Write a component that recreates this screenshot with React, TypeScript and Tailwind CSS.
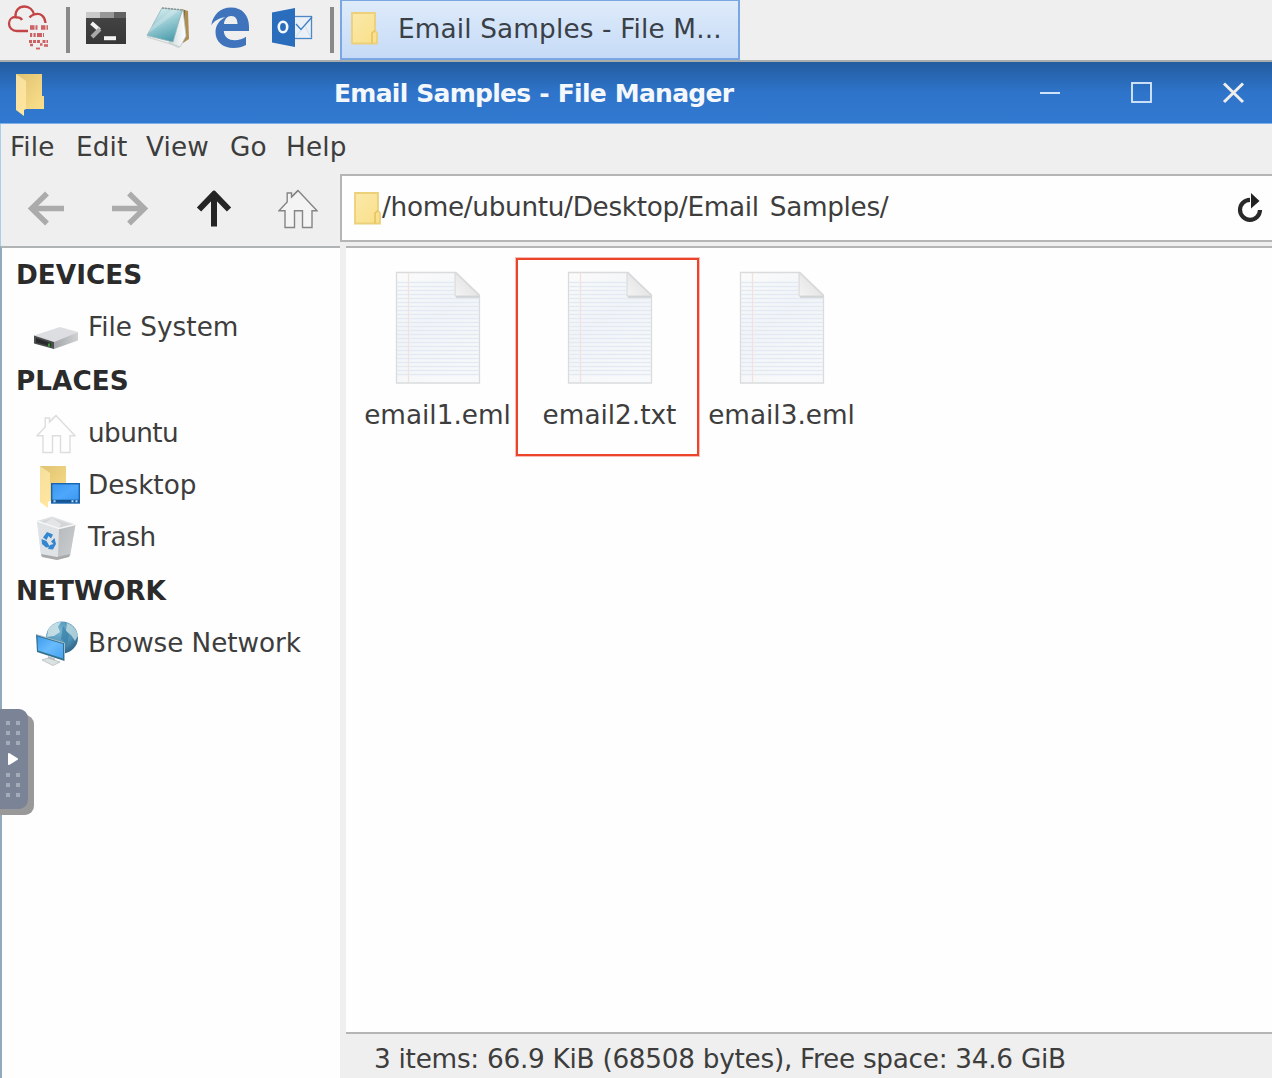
import React from "react";

const font = "font-['DejaVu_Sans',sans-serif]";

function OpenFolder({ className }: { className: string }) {
  return (
    <svg viewBox="0 0 30 43" className={className} preserveAspectRatio="none">
      <defs>
        <linearGradient id="folderBack" x1="0" y1="0" x2="1" y2="1">
          <stop offset="0" stopColor="#dfc272" />
          <stop offset="1" stopColor="#fbe08c" />
        </linearGradient>
        <linearGradient id="folderFlap" x1="0" y1="0" x2="0.3" y2="1">
          <stop offset="0" stopColor="#f5dfa0" />
          <stop offset="1" stopColor="#ffe59d" />
        </linearGradient>
      </defs>
      <path d="M1 1H27V23H29V36H1Z" fill="url(#folderBack)" />
      <path d="M1 1L11 8V36L9 37V43L1 37Z" fill="url(#folderFlap)" />
    </svg>
  );
}

function ClosedFolder() {
  return (
    <svg width="27" height="33" viewBox="0 0 27 33" className="shrink-0">
      <defs>
        <linearGradient id="closedFolder" x1="0" y1="0" x2="1" y2="1">
          <stop offset="0" stopColor="#fbe9ab" />
          <stop offset="1" stopColor="#f9df88" />
        </linearGradient>
      </defs>
      <path d="M1 1H24V19L26 21V31.5H1Z" fill="url(#closedFolder)" stroke="#ecd07a" strokeWidth="1.8" />
      <path d="M24 18.5L21 21V31.5" fill="none" stroke="#e3c15c" strokeWidth="1.5" />
    </svg>
  );
}

function HomeIcon({ stroke }: { stroke: string }) {
  return (
    <svg width="40" height="40" viewBox="0 0 40 40" className="shrink-0">
      <path
        d="M20 1.5L39 21.8H34V38.5H24.5V21.8H16.5V38.5H7V21.8H1L9.2 13V4H13.5V8Z"
        fill="#ffffff"
        fillOpacity="0.35"
        stroke={stroke}
        strokeWidth="1.4"
      />
      <path d="M13.5 8L20 1.5" stroke={stroke} strokeWidth="1.4" />
    </svg>
  );
}

function CloudIcon() {
  return (
    <svg width="44" height="46" viewBox="0 0 44 46">
      <path
        d="M21 26H10C5 26 2 22.500 2 18.500C2 14.500 5 12 8.500 12C8 5.500 12 1.500 17.500 1.500C22.500 1.500 26 5 27 9.500C34 7 38 12 38.500 18M8.500 12.500C11.500 12 14 13 15 15M27 9.500C25 10.200 23.500 11 22.500 12.500"
        fill="none"
        stroke="#c34446"
        strokeWidth="2.3"
      />
      <g stroke="#c5494b" strokeOpacity="0.85">
        <path d="M23 22.500H41" strokeDasharray="4.500 1 2 3.500" strokeWidth="4.500" />
        <path d="M23 30H37" strokeDasharray="2.200 1.300 2.200 1.300 5 1" strokeWidth="4.200" />
        <path d="M22 36.500H41" strokeDasharray="3 1 3 1 3 2.500" strokeWidth="3" />
        <path d="M23 40H26M33 39.500H35.500M37 40.500H41" strokeWidth="2.500" />
        <path d="M29 43.500H33" strokeWidth="1.800" />
      </g>
    </svg>
  );
}

function TerminalIcon() {
  return (
    <svg width="40" height="33" viewBox="0 0 40 33">
      <defs>
        <linearGradient id="term" x1="0" y1="0" x2="0" y2="1">
          <stop offset="0" stopColor="#454545" />
          <stop offset="1" stopColor="#373737" />
        </linearGradient>
      </defs>
      <rect width="40" height="32" fill="url(#term)" />
      <path d="M0 0H14V6H0Z" fill="#c9c9c9" />
      <path d="M14 0H28V6H14Z" fill="#979797" />
      <path d="M28 0H40V6H28Z" fill="#636363" />
      <path d="M5.500 11L13.500 18" stroke="#f2f2f2" strokeWidth="4" />
      <path d="M14 17L6 25" stroke="#a9a9a9" strokeWidth="4" />
      <path d="M18 26.200H30" stroke="#f2f2f2" strokeWidth="4" />
    </svg>
  );
}

function NotepadIcon() {
  return (
    <svg width="44" height="42" viewBox="0 0 44 42">
      <defs>
        <linearGradient id="notepad" x1="0.2" y1="0" x2="0.6" y2="1">
          <stop offset="0" stopColor="#dcf0f2" />
          <stop offset="0.45" stopColor="#9dced6" />
          <stop offset="1" stopColor="#4b9cab" />
        </linearGradient>
        <linearGradient id="notepadSide" x1="0" y1="0" x2="1" y2="0">
          <stop offset="0" stopColor="#cfd8da" />
          <stop offset="1" stopColor="#ffffff" />
        </linearGradient>
      </defs>
      <path d="M36 3L42 5L43 33L37 37Z" fill="#ad8d52" />
      <path d="M38 4L37 30" stroke="#6b5d3a" strokeWidth="1.500" />
      <path d="M37 4L40 30L34 41L23 37Z" fill="url(#notepadSide)" stroke="#b9c5c7" strokeWidth="0.800" />
      <path d="M16 2L36 4L27 36L1 29.500Z" fill="url(#notepad)" stroke="#8fb5bb" strokeWidth="0.800" />
      <path d="M4 22L26 4L34 4L3 27Z" fill="#ffffff" fillOpacity="0.22" />
      <path d="M1 31L26 38.500L33 41.500" fill="none" stroke="#cbd3d2" strokeWidth="1.300" />
      <path d="M16 2L37 4" stroke="#8b9492" strokeWidth="1.500" strokeDasharray="2 1" />
    </svg>
  );
}

function EdgeIcon() {
  return (
    <svg width="38" height="41" viewBox="0 0 38 41">
      <path
        d="M.3 18.200C2 7.500 9.500.5 20 .5C31.500.5 38 8.500 38 19.500V24H12.800C13.200 30.500 18 33.200 23.500 33.200C28 33.200 32 31.800 35 29.800V38C31.500 40 27.500 41 22.500 41C11.500 41 4.500 34.500 4.500 25C4.500 18.500 8.500 12.800 14.500 10.200C8.500 10.800 3.500 13.500.3 18.200ZM13 17H26.500C26.500 12 24.500 9 20.300 9C16.200 9 13.300 12.500 13 17Z"
        fill="#3f74bd"
        fillRule="evenodd"
      />
    </svg>
  );
}

function OutlookIcon() {
  return (
    <svg width="41" height="40" viewBox="0 0 41 40">
      <rect x="20" y="8.500" width="19.500" height="22" fill="#eaf0f7" stroke="#4d87c4" strokeWidth="1.300" />
      <path d="M24 16L29 21.500L40 9" fill="none" stroke="#3f7fc4" strokeWidth="1.300" />
      <path d="M24 29L29 22M39 29.500L33 18" fill="none" stroke="#ccd9e8" strokeWidth="0.900" />
      <path d="M0 4.500L23 0V39L0 34.500Z" fill="#2a6dbd" />
      <ellipse cx="11" cy="19" rx="4.200" ry="5.300" fill="none" stroke="#f4f8ff" strokeWidth="2.600" />
    </svg>
  );
}

function DriveIcon() {
  return (
    <svg width="44" height="24" viewBox="0 0 44 24">
      <defs>
        <linearGradient id="driveSide" x1="0" y1="0" x2="1" y2="0">
          <stop offset="0" stopColor="#a4a7aa" />
          <stop offset="1" stopColor="#cfd1d3" />
        </linearGradient>
      </defs>
      <path d="M0 9.500L26 1L44 6L20 16Z" fill="#dcdee1" />
      <path d="M20 16L44 6V14.500L20 23Z" fill="url(#driveSide)" />
      <path d="M0 9.500L20 16V23L0 17.500Z" fill="#4a4d4e" />
      <path d="M2 12L17 17V20.500L2 16.500Z" fill="#282b2b" />
      <path d="M15 17.500V20.500" stroke="#3c9a36" strokeWidth="2" />
    </svg>
  );
}

function DesktopIcon() {
  return (
    <span className="relative block h-[43px] w-[42px]">
      <OpenFolder className="h-[43px] w-[30px]" />
      <svg width="29" height="21" viewBox="0 0 29 21" className="absolute top-[18px] left-[12px]">
        <defs>
          <linearGradient id="screen" x1="0" y1="0" x2="1" y2="1">
            <stop offset="0" stopColor="#3c96ef" />
            <stop offset="0.5" stopColor="#4da7fb" />
            <stop offset="1" stopColor="#3894f0" />
          </linearGradient>
        </defs>
        <rect x="0.700" y="0.700" width="27.600" height="19.300" fill="url(#screen)" stroke="#1765b3" strokeWidth="1.400" />
        <path d="M1 18.200H28" stroke="#165595" strokeWidth="3" />
        <path d="M2.500 18.200H4.500M20.500 18.200H22.500M24.500 18.200H26.500" stroke="#b5dcff" strokeWidth="2" />
      </svg>
    </span>
  );
}

function TrashIcon() {
  return (
    <svg width="40" height="44" viewBox="0 0 40 44">
      <defs>
        <linearGradient id="binSide" x1="0" y1="0" x2="1" y2="1">
          <stop offset="0" stopColor="#b5b9bc" />
          <stop offset="1" stopColor="#cccfd1" />
        </linearGradient>
      </defs>
      <path d="M1 5L16 0.500L39.500 8.500L34 40L21 44L5 40Z" fill="#dfe2e5" />
      <path d="M4 6L16 2L36 9L23 12.500Z" fill="#d3d5d7" />
      <path d="M9 7L16 2L25 8L23 12Z" fill="#e4e5e6" />
      <path d="M1 5L23 12.500L22 41L5 38Z" fill="#e0e3e6" />
      <path d="M23 12.500L39.500 8.500L34 40L22 41Z" fill="url(#binSide)" />
      <path d="M5 38L21 41L34 38L33 41L21 44L6 41Z" fill="#aaa9a9" />
      <path d="M1 5L23 12.500L39.500 8.500" fill="none" stroke="#f6f6f6" strokeWidth="1.600" />
      <g fill="#3486d1">
        <path d="M7 21.500L11 16L17 18.500L15 22.500L12.500 20L10.500 24Z" />
        <path d="M5.500 23L10.500 25L14 31L10 31.500L6 28Z" />
        <path d="M12 33L14 29L17.500 28L15 25.500L18.500 22L20 28L17 33.500Z" />
      </g>
    </svg>
  );
}

function NetworkIcon() {
  return (
    <svg width="43" height="45" viewBox="0 0 43 45">
      <defs>
        <radialGradient id="globe" cx="0.400" cy="0.300" r="0.750">
          <stop offset="0" stopColor="#79b7d3" />
          <stop offset="0.600" stopColor="#4d8fb4" />
          <stop offset="1" stopColor="#2c5f84" />
        </radialGradient>
        <linearGradient id="monitor" x1="0" y1="0" x2="1" y2="1">
          <stop offset="0" stopColor="#3f9cec" />
          <stop offset="0.500" stopColor="#68bbfc" />
          <stop offset="1" stopColor="#47a2f2" />
        </linearGradient>
      </defs>
      <circle cx="26" cy="16.500" r="16" fill="url(#globe)" />
      <path d="M12 9C15 4 20 1 25 1L22 6L24 11L18 15L11 16Z" fill="#d1e6e8" fillOpacity="0.850" />
      <path d="M31 2C37 4 41 9 42 15L39 20L35 14L30 10Z" fill="#c2dde1" fillOpacity="0.800" />
      <path d="M27 5L33 14L31 24L25 18Z" fill="#347ca8" fillOpacity="0.650" />
      <path d="M0 13.500L28.500 22V40L1 31Z" fill="#34718f" />
      <path d="M1.500 15.500L27 23V37.500L2 29.500Z" fill="url(#monitor)" />
      <path d="M0 13.500L28.500 22V40" fill="none" stroke="#a1bdc7" strokeWidth="1" />
      <path d="M12 35L19 37.500V41H12Z" fill="#b5bfc4" />
      <path d="M6 39L12 37L24 41L17 44.500Z" fill="#dce1e2" stroke="#b5bcbf" strokeWidth="0.800" />
    </svg>
  );
}

function DocumentIcon() {
  return (
    <svg width="86" height="114" viewBox="0 0 86 114">
      <defs>
        <linearGradient id="paper" x1="0" y1="0" x2="0.500" y2="1">
          <stop offset="0" stopColor="#fbfbfb" />
          <stop offset="0.500" stopColor="#f2f4f7" />
          <stop offset="1" stopColor="#f8f9fa" />
        </linearGradient>
        <linearGradient id="corner" x1="0" y1="1" x2="1" y2="0.200">
          <stop offset="0" stopColor="#f4f4f4" />
          <stop offset="1" stopColor="#dddddd" />
        </linearGradient>
      </defs>
      <path d="M1.500 1.500H61L84.500 24V112H1.500Z" fill="url(#paper)" stroke="#d9dbdd" strokeWidth="1.300" />
      {Array.from({ length: 24 }, (_, i) => (
        <path key={i} d={`M2 ${11.5 + i * 4}H${i < 4 ? 59 : 84}`} stroke="#e2eaf3" strokeWidth="1.500" />
      ))}
      <path d="M13.500 2V111" stroke="#f5e0e0" strokeWidth="1.300" />
      <path d="M60 1.500L84.500 25H60Z" fill="url(#corner)" stroke="#d6d6d6" strokeWidth="1" />
      <path d="M61 26H84" stroke="#cccecf" strokeWidth="1.500" />
    </svg>
  );
}

function Arrow({ className, color, heavy }: { className?: string; color: string; heavy?: boolean }) {
  return (
    <svg width="37" height="36" viewBox="0 0 37 36" className={className}>
      <path d="M36 17.500H4M19 2.500L3.500 17.500L19 32.500" fill="none" stroke={color} strokeWidth={heavy ? 6 : 5.4} />
    </svg>
  );
}

function Heading({ children }: { children: React.ReactNode }) {
  return <h2 className="flex h-[54px] items-center pl-[14px] text-[26.3px] font-bold text-[#2b2b2b]">{children}</h2>;
}

function Place({ icon, label, tracking }: { icon: React.ReactNode; label: string; tracking?: string }) {
  return (
    <li className="flex h-[52px] items-center">
      <span className="flex h-full w-[86px] shrink-0 items-center pl-[32px]">{icon}</span>
      <span className={`pb-[2px] ${tracking ?? ""}`}>{label}</span>
    </li>
  );
}

function FileItem({ name }: { name: string }) {
  return (
    <div className="flex w-[172px] flex-col items-center">
      <DocumentIcon />
      <span className="mt-[14px] mr-px leading-[32px] whitespace-nowrap">{name}</span>
    </div>
  );
}

export default function App() {
  return (
    <div className={`relative flex h-[1078px] w-[1272px] flex-col overflow-hidden bg-[#efefef] text-[26.3px] leading-[32px] text-[#3d3d3d] ${font}`}>
      <header className="flex h-[62px] shrink-0 items-start border-b-2 border-[#a9adac]">
        <div className="flex h-[60px] w-[340px] shrink-0 items-start">
          <span className="mt-[5px] ml-[7px] w-[59px]"><CloudIcon /></span>
          <span className="mt-[7px] h-[46px] w-[4px] bg-[#898989]" />
          <span className="mt-[12px] ml-[16px] w-[60px]"><TerminalIcon /></span>
          <span className="mt-[6px] w-[65px]"><NotepadIcon /></span>
          <span className="mt-[7px] w-[61px]"><EdgeIcon /></span>
          <span className="mt-[8px] w-[58px]"><OutlookIcon /></span>
          <span className="mt-[7px] h-[46px] w-[4px] bg-[#898989]" />
        </div>
        <button className="flex h-[60px] w-[400px] items-center border-2 border-t border-[#7aa7e2] bg-linear-to-b from-[#deebfa] to-[#c6dbf7] pb-[3px] pl-[9px] text-left">
          <ClosedFolder />
          <span className="mt-[2px] ml-[20px] tracking-[0.15px] whitespace-nowrap text-[#3a4047]">Email Samples - File M...</span>
        </button>
      </header>

      <div className="flex h-[62px] shrink-0 items-center border-b border-[#7fb1e8] bg-linear-to-b from-[#235c9f] via-[#2e74ca] via-50% to-[#3179d0] text-white">
        <OpenFolder className="mt-[3px] ml-[15px] h-[43px] w-[30px]" />
        <span className="mt-[2px] ml-[289px] w-[660px] text-[25px] font-bold tracking-[-0.72px] [word-spacing:0.8px] whitespace-nowrap text-[#f4f8fc]">Email Samples - File Manager</span>
        <svg width="228" height="40" viewBox="0 0 228 40" className="ml-[45px] shrink-0" fill="none">
          <path d="M1 20H21" stroke="#cfe3f8" strokeWidth="2" />
          <rect x="93" y="10" width="19" height="19" stroke="#dceafa" strokeWidth="1.800" />
          <path d="M185 10.500L204 29M204 10.500L185 29" stroke="#f0eeea" strokeWidth="3" />
        </svg>
      </div>

      <nav className="flex h-[50px] shrink-0 items-start border-l border-[#a8cfea] pt-[7px] pl-[9px] tracking-[0.15px]">
        <span className="w-[66px]">File</span>
        <span className="w-[70px]">Edit</span>
        <span className="w-[84px]">View</span>
        <span className="w-[56px]">Go</span>
        <span>Help</span>
      </nav>

      <div className="flex h-[72px] shrink-0 border-l border-[#a8cfea]">
        <div className="flex w-[339px] shrink-0 items-start pt-[17px]">
          <Arrow color="#ababab" className="ml-[27px]" />
          <Arrow color="#ababab" className="ml-[46px] -scale-x-100" />
          <Arrow color="#242424" heavy className="ml-[47px] rotate-90" />
          <span className="-mt-[2px] ml-[46px]"><HomeIcon stroke="#858585" /></span>
        </div>
        <div className="flex h-[68px] flex-1 items-center border-2 border-r-0 border-[#b5b5b5] bg-[#fefefe] pl-[12px]">
          <ClosedFolder />
          <span className="ml-px pb-[3px] tracking-[-0.32px] [word-spacing:3px]">/home/ubuntu/Desktop/Email Samples/</span>
          <svg width="28" height="32" viewBox="0 0 28 32" className="ml-auto mr-[8px]">
            <path d="M14 7.800A10 10 0 1 0 24 18" fill="none" stroke="#292929" strokeWidth="4.200" />
            <path d="M15 1L23.500 9L15 16.500Z" fill="#222222" />
          </svg>
        </div>
      </div>

      <main className="flex min-h-0 flex-1">
        <aside className="w-[340px] shrink-0 border-t-2 border-l-2 border-[#b1b4b5] border-l-[#91a9ba] bg-[#fefefe]">
          <Heading>DEVICES</Heading>
          <ul><Place label="File System" icon={<span className="pt-[20px]"><DriveIcon /></span>} /></ul>
          <Heading>PLACES</Heading>
          <ul>
            <Place label="ubuntu" tracking="tracking-[-0.6px]" icon={<span className="pl-[2px]"><HomeIcon stroke="#dddddd" /></span>} />
            <Place label="Desktop" icon={<span className="pl-[5px]"><DesktopIcon /></span>} />
            <Place label="Trash" tracking="tracking-[-0.3px]" icon={<span className="pl-[2px]"><TrashIcon /></span>} />
          </ul>
          <Heading>NETWORK</Heading>
          <ul><Place label="Browse Network" tracking="tracking-[-0.07px]" icon={<span className="pb-[2px] pl-[2px]"><NetworkIcon /></span>} /></ul>
        </aside>

        <section className="flex min-w-0 flex-1 flex-col">
          <div className="ml-[6px] flex-1 border-y-2 border-[#b5b5b5] bg-[#fefefe]">
            <div className="flex pt-[23px] pl-[6px]">
              <FileItem name="email1.eml" />
              <FileItem name="email2.txt" />
              <FileItem name="email3.eml" />
            </div>
          </div>
          <footer className="flex h-[44px] items-center pt-[5px] pl-[34px] tracking-[-0.27px]">3 items: 66.9 KiB (68508 bytes), Free space: 34.6 GiB</footer>
        </section>
      </main>

      <div className="absolute top-[258px] left-[516px] h-[198px] w-[183px] border-2 border-[#ec432b] shadow-[0_0_0_1px_rgba(236,67,43,0.35)]" />

      <div className="absolute top-[709px] left-0 h-[106px] w-[34px]">
        <div className="absolute top-[6px] left-0 h-[100px] w-[34px] rounded-r-[9px] bg-[#999999]" />
        <div className="absolute top-0 left-0 h-[100px] w-[28px] rounded-r-[9px] bg-[#7b8397]">
          <svg width="28" height="100" viewBox="0 0 28 100">
            {[12, 22, 32, 64, 74, 84].map((y) => (
              <path key={y} d={`M6 ${y}h4v4h-4zM16 ${y}h4v4h-4z`} fill="#a3abb9" />
            ))}
            <path d="M9 45L17 50L9 55Z" fill="#ffffff" stroke="#ffffff" strokeWidth="2" strokeLinejoin="round" />
          </svg>
        </div>
      </div>
    </div>
  );
}
